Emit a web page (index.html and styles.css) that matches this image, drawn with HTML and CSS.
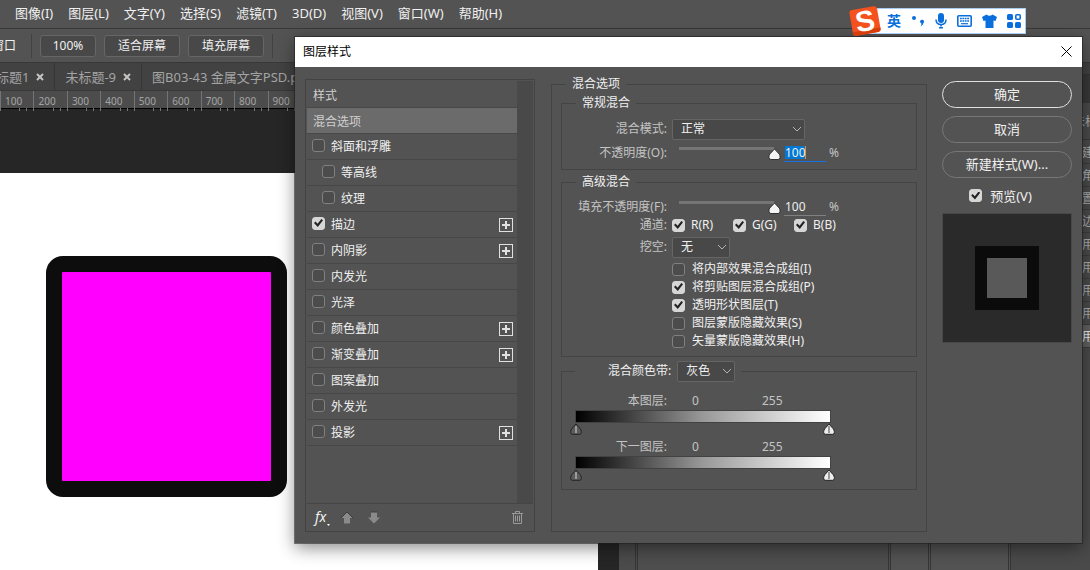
FILE: index.html
```html
<!DOCTYPE html>
<html lang="zh-CN">
<head>
<meta charset="utf-8">
<title>图层样式</title>
<link rel="stylesheet" href="styles.css">
</head>
<body>
<svg class="defs" width="0" height="0" aria-hidden="true">
  <symbol id="chevron" viewBox="0 0 10 6"><path d="M1 1l4 4 4-4" fill="none" stroke="#b4b4b4"/></symbol>
  <symbol id="plus" viewBox="0 0 14 14"><rect x=".5" y=".5" width="13" height="13" fill="none" stroke="#e0e0e0"/><path d="M7 3v8M3 7h8" stroke="#e0e0e0" stroke-width="2"/></symbol>
  <symbol id="close" viewBox="0 0 8 8"><path d="M1 1l6 6M7 1l-6 6" stroke="#c4c4c4" stroke-width="2"/></symbol>
  <symbol id="stop" viewBox="0 0 12 12"><path d="M6 1L2 5.500Q.7 7 .7 8.500v1Q.7 11.300 2.500 11.300h7q1.800 0 1.800-1.800v-1q0-1.500-1.300-3z" fill="currentColor" stroke="#222"/><path d="M6 3v7" stroke="#999" stroke-width="2"/></symbol>
</svg>
<div class="app">
  <nav class="menu">
    <a href="#">图像(I)</a><a href="#">图层(L)</a><a href="#">文字(Y)</a><a href="#">选择(S)</a><a href="#">滤镜(T)</a><a href="#">3D(D)</a><a href="#">视图(V)</a><a href="#">窗口(W)</a><a href="#">帮助(H)</a>
  </nav>
  <div class="options">
    <span class="options-label">窗口</span>
    <button class="tool tool-small">100%</button>
    <button class="tool">适合屏幕</button>
    <button class="tool">填充屏幕</button>
    <span class="options-end"></span>
  </div>
  <div class="workspace">
    <main class="editor">
      <div class="tabs">
        <div class="tab tab-first"><span>标题1</span><button class="tab-close" aria-label="关闭"><svg><use href="#close"/></svg></button></div>
        <div class="tab"><span>未标题-9</span><button class="tab-close" aria-label="关闭"><svg><use href="#close"/></svg></button></div>
        <div class="tab"><span>图B03-43 金属文字PSD.ps</span></div>
      </div>
      <div class="ruler"><span>100</span><span>200</span><span>300</span><span>400</span><span>500</span><span>600</span><span>700</span><span>800</span><span>900</span></div>
      <div class="canvas"><div class="paper"><div class="shape"></div></div></div>
    </main>
    <div class="dock dock-edge"></div>
    <div class="dock dock-wide"></div>
    <div class="dock dock-icons"></div>
    <div class="dock dock-mid"></div>
    <aside class="history">
      <div class="history-top"></div>
      <div class="history-tabs"></div>
      <div class="history-doc">未标</div>
      <ul class="history-list"><li>建</li><li>角</li><li>置</li><li>边</li><li>用</li><li>用</li><li>用</li><li>用</li><li class="current">用</li></ul>
    </aside>
  </div>
</div>

<section class="dialog" role="dialog" aria-labelledby="dialog-title">
  <header class="titlebar">
    <h1 id="dialog-title">图层样式</h1>
    <button class="dialog-close" aria-label="关闭"><svg width="11" height="11" viewBox="0 0 11 11"><path d="M.5.5l10 10M10.500.5l-10 10" stroke="#000"/></svg></button>
  </header>
  <div class="dialog-body">
    <div class="styles">
      <div class="styles-scroll">
        <ul class="styles-list">
          <li class="plain">样式</li>
          <li class="plain selected">混合选项</li>
          <li><label><input type="checkbox">斜面和浮雕</label></li>
          <li class="sub"><label><input type="checkbox">等高线</label></li>
          <li class="sub"><label><input type="checkbox">纹理</label></li>
          <li><label><input type="checkbox" checked>描边</label><button class="add" aria-label="添加描边"><svg><use href="#plus"/></svg></button></li>
          <li><label><input type="checkbox">内阴影</label><button class="add" aria-label="添加内阴影"><svg><use href="#plus"/></svg></button></li>
          <li><label><input type="checkbox">内发光</label></li>
          <li><label><input type="checkbox">光泽</label></li>
          <li><label><input type="checkbox">颜色叠加</label><button class="add" aria-label="添加颜色叠加"><svg><use href="#plus"/></svg></button></li>
          <li><label><input type="checkbox">渐变叠加</label><button class="add" aria-label="添加渐变叠加"><svg><use href="#plus"/></svg></button></li>
          <li><label><input type="checkbox">图案叠加</label></li>
          <li><label><input type="checkbox">外发光</label></li>
          <li><label><input type="checkbox">投影</label><button class="add" aria-label="添加投影"><svg><use href="#plus"/></svg></button></li>
        </ul>
      </div>
      <div class="styles-footer">
        <button class="fx" aria-label="效果">fx<svg width="3" height="2" viewBox="0 0 3 2"><path d="M0 0h3L1.500 2z" fill="#fff"/></svg></button>
        <button class="foot" aria-label="上移"><svg width="12" height="13" viewBox="0 0 12 13"><path d="M6 1l6 6H9v5.500H3V7H0z" fill="#8a8a8a"/><path d="M0 7L6 1l6 6" fill="none" stroke="#3c3c3c"/></svg></button>
        <button class="foot foot-down" aria-label="下移"><svg width="12" height="13" viewBox="0 0 12 13"><path d="M6 12.500l6-6H9V1H3v5.500H0z" fill="#8a8a8a"/><path d="M3 1h6" stroke="#3c3c3c"/></svg></button>
        <button class="foot trash" aria-label="删除"><svg width="11" height="13" viewBox="0 0 11 13"><path d="M0 2.500h11M3.500 2V.5h4V2M1.500 3v9.500h8V3M3.500 4.500v6M5.500 4.500v6M7.500 4.500v6" fill="none" stroke="#999"/></svg></button>
      </div>
    </div>

    <fieldset class="blending">
      <legend>混合选项</legend>
      <fieldset class="group">
        <legend>常规混合</legend>
        <div class="row row-select">
          <label for="mode">混合模式:</label>
          <span class="select select-wide"><select id="mode"><option>正常</option></select><svg><use href="#chevron"/></svg></span>
        </div>
        <div class="row row-gap">
          <label for="opacity">不透明度(O):</label>
          <input class="slider" id="opacity" type="range" min="0" max="100" value="100">
          <input class="number number-active" type="text" value="100" aria-label="不透明度">
          <span class="unit">%</span>
        </div>
      </fieldset>
      <fieldset class="group group-advanced">
        <legend>高级混合</legend>
        <div class="row">
          <label for="fill">填充不透明度(F):</label>
          <input class="slider" id="fill" type="range" min="0" max="100" value="100">
          <input class="number" type="text" value="100" aria-label="填充不透明度">
          <span class="unit">%</span>
        </div>
        <div class="row">
          <span class="row-label">通道:</span>
          <div class="channels">
            <label><input type="checkbox" checked>R(R)</label>
            <label><input type="checkbox" checked>G(G)</label>
            <label><input type="checkbox" checked>B(B)</label>
          </div>
        </div>
        <div class="row row-select row-knockout">
          <label for="knockout">挖空:</label>
          <span class="select"><select id="knockout"><option>无</option></select><svg><use href="#chevron"/></svg></span>
        </div>
        <div class="checks">
          <label><input type="checkbox">将内部效果混合成组(I)</label>
          <label><input type="checkbox" checked>将剪贴图层混合成组(P)</label>
          <label><input type="checkbox" checked>透明形状图层(T)</label>
          <label><input type="checkbox">图层蒙版隐藏效果(S)</label>
          <label><input type="checkbox">矢量蒙版隐藏效果(H)</label>
        </div>
      </fieldset>
      <fieldset class="group group-blendif">
        <legend><label for="band">混合颜色带:</label><span class="select"><select id="band"><option>灰色</option></select><svg><use href="#chevron"/></svg></span></legend>
        <div class="range-head"><span class="range-label">本图层:</span><span class="low">0</span><span>255</span></div>
        <div class="ramp"></div>
        <div class="stops"><button class="stop" aria-label="黑色滑块"><svg><use href="#stop"/></svg></button><button class="stop stop-white" aria-label="白色滑块"><svg><use href="#stop"/></svg></button></div>
        <div class="range-head"><span class="range-label">下一图层:</span><span class="low">0</span><span>255</span></div>
        <div class="ramp"></div>
        <div class="stops"><button class="stop" aria-label="黑色滑块"><svg><use href="#stop"/></svg></button><button class="stop stop-white" aria-label="白色滑块"><svg><use href="#stop"/></svg></button></div>
      </fieldset>
    </fieldset>

    <div class="actions">
      <button class="action action-primary">确定</button>
      <button class="action">取消</button>
      <button class="action">新建样式(W)...</button>
      <label class="preview-toggle"><input type="checkbox" checked>预览(V)</label>
      <div class="preview"><div class="preview-shape"></div></div>
    </div>
  </div>
</section>

<div class="ime">
  <svg class="ime-logo" width="34" height="32" viewBox="0 0 34 32">
    <g transform="rotate(-10 17 16)"><rect x="3" y="3" width="28" height="26" rx="3" fill="#f4511e"/><path d="M3 25h28v1q0 3-3 3H6q-3 0-3-3z" fill="#d83d0c"/><text x="17" y="26" text-anchor="middle" class="ime-s">S</text></g>
  </svg>
  <span class="ime-lang">英</span>
  <svg width="14" height="14" viewBox="0 0 14 14"><circle cx="3" cy="4" r="2" fill="#0a6fdc"/><path d="M9 7.500a2 2 0 1 1 3.500 1.500q-.5 2.500-3 3.500 1-1.500 1-3-1.300-.3-1.500-2z" fill="#0a6fdc"/></svg>
  <svg width="12" height="16" viewBox="0 0 12 16"><rect x="3" y="0" width="6" height="10" rx="3" fill="#0a6fdc"/><path d="M1 6.500q0 5 5 5t5-5" fill="none" stroke="#0a6fdc" stroke-width="1.500"/><path d="M6 11.500v2M4 14.700h4" stroke="#0a6fdc" stroke-width="1.600"/></svg>
  <svg width="15" height="12" viewBox="0 0 15 12"><rect x=".8" y=".8" width="13.400" height="10.400" rx="1" fill="none" stroke="#0a6fdc" stroke-width="1.600"/><path d="M3 3.500h9M3 6h9" stroke="#0a6fdc" stroke-width="1.500" stroke-dasharray="1.800 .6"/><path d="M4 8.700h7" stroke="#0a6fdc" stroke-width="1.200"/></svg>
  <svg width="15" height="14" viewBox="0 0 15 14"><path d="M4.500.5Q7.500 3 10.500.5L15 3l-1.500 4-2-.5V14h-8V6.500l-2 .5L0 3z" fill="#0a6fdc"/></svg>
  <svg width="14" height="14" viewBox="0 0 14 14"><g fill="#0a6fdc"><rect x="0" y="0" width="6" height="6" rx="1.500"/><rect x="0" y="8" width="6" height="6" rx="1.500"/><rect x="8" y="8" width="6" height="6" rx="1.500"/></g><rect x="8.800" y=".8" width="4.400" height="4.400" rx="1" fill="none" stroke="#0a6fdc" stroke-width="1.600"/></svg>
</div>
</body>
</html>
```
FILE: styles.css
```css
* { box-sizing: border-box; }
html, body { height: 100%; }
body {
  margin: 0;
  overflow: hidden;
  background: #535353;
  color: #f0f0f0;
  font: 12px/16px "Noto Sans", "Noto Sans CJK SC", sans-serif;
}
button, input, select { font: inherit; color: inherit; margin: 0; }
button { padding: 0; border: 0; background: none; }
ul { list-style: none; margin: 0; padding: 0; }
svg { display: block; }
.defs { position: absolute; }

/* application frame */
.app { height: 100%; display: flex; flex-direction: column; }
.menu {
  flex: none; display: flex; gap: 15px; align-items: center;
  height: 29px; padding: 0 15px 2px; border-bottom: 1px solid #383838;
  font-size: 13px;
}
.menu a { color: #f0f0f0; text-decoration: none; white-space: nowrap; }
.options { flex: none; display: flex; align-items: center; gap: 8px; height: 34px; border-bottom: 1px solid #383838; overflow: hidden; }
.options-label {
  display: flex; justify-content: flex-end; align-items: center;
  width: 32px; height: 24px; padding-right: 15px; border-right: 1px solid #424242; white-space: nowrap;
}
.tool { width: 76px; height: 22px; border: 1px solid #666; border-radius: 3px; background: #484848; }
.tool-small { width: 56px; }
.options-end { width: 1px; height: 24px; background: #424242; }
.workspace { flex: 1; display: flex; min-height: 0; }
.editor { flex: 0 0 619px; display: flex; flex-direction: column; min-width: 0; background: #262626; }
.tabs { flex: none; display: flex; height: 28px; background: #424242; border-bottom: 1px solid #383838; color: #a4a4a4; font-size: 13px; overflow: hidden; }
.tab { display: flex; align-items: center; gap: 7px; padding: 0 10px; border-right: 1px solid #363636; white-space: nowrap; }
.tab-first { margin-left: -14px; }
.tab-close svg { width: 8px; height: 8px; }
.ruler {
  flex: none; display: grid; grid-template-columns: repeat(9, 1fr); width: 301px; height: 18px;
  background: #4c4c4c; border-bottom: 1px solid #000;
  color: #a4a4a4; font-size: 10px; line-height: 20px;
}
.ruler span {
  padding-left: 4px; border-left: 1px solid #747474;
  background: repeating-linear-gradient(90deg, #747474 0 1px, transparent 1px 7px) right bottom / 14px 3px no-repeat;
}
.canvas { flex: 1; display: flex; min-height: 0; padding: 64px 21px 0 0; }
.paper { flex: 1; padding: 83px 46px; background: #fff; }
.shape { width: 241px; height: 241px; border: 16px solid #0d0d0d; border-radius: 17px; background: #f0f; }
.dock { border-right: 3px double #363636; background: #4e4e4e; }
.dock-edge { flex: 0 0 19px; background: #4b4b4b; }
.dock-wide { flex: 0 0 253px; }
.dock-icons { flex: 0 0 40px; background: #535353; }
.dock-mid { flex: 0 0 80px; background: #535353; }
.history { flex: 1; min-width: 0; overflow: hidden; background: #4a4a4a; color: #aaa; }
.history-top { height: 12px; background: #414141; border-bottom: 1px solid #333; }
.history-tabs { height: 28px; background: #383838; }
.history-doc { height: 37px; padding: 11px 0 0 62px; border-bottom: 1px solid #3a3a3a; white-space: nowrap; overflow: hidden; }
.history-list { padding-top: 1px; }
.history-list li { height: 23px; padding: 4px 0 0 71px; border-bottom: 1px solid #3c3c3c; }
.history-list .current { background: #606060; color: #e8e8e8; }

/* dialog window */
.dialog {
  position: absolute; top: 37px; left: 295px; right: 8px;
  background: #535353;
  box-shadow: 0 0 0 1px rgba(30, 30, 30, .55), 0 5px 16px rgba(0, 0, 0, .45);
}
.titlebar {
  display: flex; align-items: center; justify-content: space-between;
  height: 30px; padding: 0 10px 0 8px; background: #fff; color: #000;
}
.titlebar h1 { margin: 0; font-size: 12px; font-weight: 400; }
.dialog-close { margin-bottom: 2px; }
.dialog-body { display: grid; grid-template-columns: 230px 1fr 130px; gap: 16px; padding: 9px 10px 11px; }

/* checkboxes */
input[type="checkbox"] {
  appearance: none; flex: none; display: grid; place-items: center;
  width: 13px; height: 13px; border: 1px solid #808080; border-radius: 3px; background: #4c4c4c;
}
input[type="checkbox"]:checked { border-color: #d6d6d6; background: #d6d6d6; }
input[type="checkbox"]:checked::after {
  content: ""; width: 9px; height: 8px; background: #222;
  clip-path: polygon(0 50%, 16% 32%, 40% 60%, 82% 0, 100% 16%, 42% 100%);
}

/* effect list */
.styles { display: flex; flex-direction: column; margin-top: 3px; border: 1px solid #434343; padding: 1px; }
.styles-scroll { flex: 1; padding-right: 16px; background: #494949; border-bottom: 1px solid #454545; }
.styles-list { height: 100%; background: #535353; }
.styles-list li { display: flex; align-items: center; justify-content: space-between; height: 26px; padding: 1px 4px 0 5px; border-bottom: 1px solid #474747; }
.styles-list .plain { padding: 3px 0 0 6px; color: #d0d0d0; }
.styles-list .plain:first-child { height: 27px; }
.styles-list .selected { background: #6b6b6b; }
.styles-list .sub { padding-left: 15px; }
.styles-list label { display: flex; align-items: center; gap: 6px; }
.styles-list label input { margin-bottom: 4px; }
.add svg { width: 14px; height: 14px; }
.styles-footer { display: flex; align-items: center; height: 26px; padding: 0 10px 0 8px; }
.fx { display: flex; align-items: flex-end; gap: 1px; width: 26px; font: italic 14px/18px "Noto Sans", sans-serif; }
.foot-down { margin-left: 15px; }
.trash { margin-left: auto; }

/* blending options */
fieldset { min-width: 0; margin: 0; border: 1px solid #444; }
.blending { margin-right: -1px; padding: 3px 9px 41px; }
.blending > legend { margin-left: 5px; padding: 0 6px; }
.group { padding: 8px 0 7px; }
.group legend { margin-left: 14px; padding: 0 6px; }
.group-advanced { margin-top: 4px; }
.row { display: flex; align-items: center; height: 18px; color: #c4c4c4; }
.row-select { height: 20px; }
.row-gap { margin-top: 5px; }
.row-knockout { margin-top: 3px; }
.row > label, .row-label { flex: 0 0 105px; text-align: right; white-space: nowrap; margin-right: 5px; }
.select { display: inline-grid; align-items: center; width: 58px; height: 21px; color: #f0f0f0; }
.select-wide { width: 133px; }
.select select, .select svg { grid-area: 1 / 1; }
.select select { appearance: none; width: 100%; height: 100%; padding: 0 8px; border: 1px solid #656565; background: #484848; border-radius: 2px; }
.select svg { justify-self: end; width: 10px; height: 6px; margin-right: 3px; pointer-events: none; }
.slider {
  appearance: none; width: 102px; height: 14px; margin: 0 3px 0 7px;
  background: linear-gradient(#757575, #757575) 0 1px / 95px 3px no-repeat;
}
.slider::-webkit-slider-thumb {
  appearance: none; width: 13px; height: 12px; margin-top: 1px;
  background: url("data:image/svg+xml,%3Csvg xmlns='http://www.w3.org/2000/svg' viewBox='0 0 13 12'%3E%3Cpath d='M6.5 1L1.800 6Q1 7 1 8v1.500Q1 11.500 3 11.500h7q2 0 2-2V8q0-1-.8-2z' fill='%23f4f4f4' stroke='%23333'/%3E%3C/svg%3E") no-repeat;
}
.number { width: 42px; height: 17px; padding: 0 1px; border: 0; border-bottom: 1px solid #808080; background: none; color: #f0f0f0; outline: 0; }
.number-active {
  border-bottom-color: #1473e6;
  background: linear-gradient(90deg, #0078d7 20px, #f08a24 20px) 1px 1px / 21px 13px no-repeat;
}
.unit { margin-left: 3px; }
.channels { display: flex; color: #f0f0f0; }
.channels label { display: flex; align-items: center; gap: 6px; width: 61px; }
.checks { display: grid; gap: 2px; padding-left: 110px; margin-top: 4px; }
.checks label { display: flex; align-items: center; gap: 7px; white-space: nowrap; }
.group-blendif { margin-top: 3px; padding: 10px 0 5px 13px; }
.group-blendif legend { display: flex; align-items: center; gap: 6px; height: 22px; margin-left: 0; padding: 0 6px 0 33px; }
.range-head { display: flex; align-items: center; height: 18px; color: #c4c4c4; }
.range-label { width: 92px; text-align: right; }
.low { width: 95px; padding-left: 25px; }
.ramp { width: 256px; height: 13px; border: 1px solid #424242; background: linear-gradient(90deg, #000, #999 50%, #fff); }
.stops { display: flex; justify-content: space-between; width: 265px; height: 15px; margin-left: -5px; }
.stop { width: 12px; height: 12px; color: #5c5c5c; }
.stop-white { color: #eee; }
.stop svg { width: 12px; height: 12px; }

/* dialog buttons */
.actions { display: flex; flex-direction: column; gap: 8px; margin-top: 5px; }
.action { height: 27px; padding-bottom: 2px; border: 1px solid #777; border-radius: 14px; font-size: 13px; }
.action-primary { border-color: #e0e0e0; }
.preview-toggle { display: flex; align-items: center; justify-content: center; gap: 8px; height: 19px; padding-right: 13px; font-size: 13px; }
.preview { display: grid; place-items: center; aspect-ratio: 1; border: 1px solid #484848; background: #2a2a2a; }
.preview-shape { width: 64px; height: 64px; border: 12px solid #0b0b0b; background: #595959; }

/* input method bar */
.ime {
  position: absolute; top: 8px; right: 64px; display: flex; align-items: center; gap: 10px;
  height: 26px; padding: 0 4px 0 0; border: 1px solid #a9cdf0; background: #fff;
}
.ime-logo { margin: 0 -5px 0 -20px; }
.ime-s { fill: #fff; font: bold 29px "Liberation Sans", sans-serif; }
.ime-lang { color: #0a6fdc; font-size: 14px; font-weight: 700; }
```
